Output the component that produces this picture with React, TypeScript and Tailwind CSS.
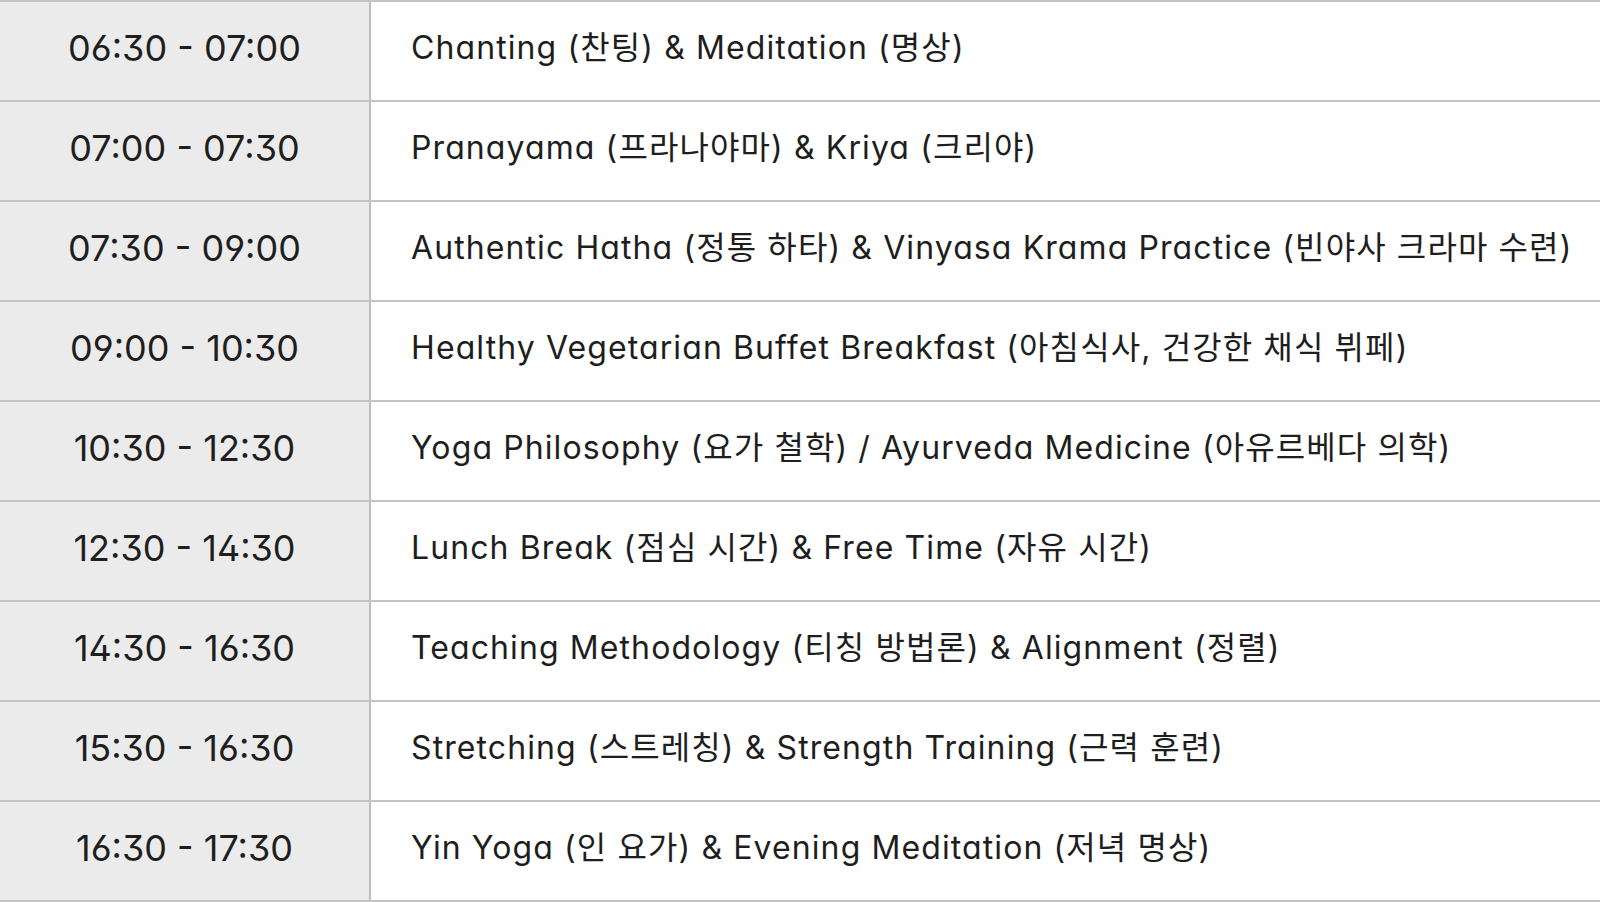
import React from "react";

const rows: [string, string][] = [
  ["06:30 - 07:00", "Chanting (찬팅) & Meditation (명상)"],
  ["07:00 - 07:30", "Pranayama (프라나야마) & Kriya (크리야)"],
  ["07:30 - 09:00", "Authentic Hatha (정통 하타) & Vinyasa Krama Practice (빈야사 크라마 수련)"],
  ["09:00 - 10:30", "Healthy Vegetarian Buffet Breakfast (아침식사, 건강한 채식 뷔페)"],
  ["10:30 - 12:30", "Yoga Philosophy (요가 철학) / Ayurveda Medicine (아유르베다 의학)"],
  ["12:30 - 14:30", "Lunch Break (점심 시간) & Free Time (자유 시간)"],
  ["14:30 - 16:30", "Teaching Methodology (티칭 방법론) & Alignment (정렬)"],
  ["15:30 - 16:30", "Stretching (스트레칭) & Strength Training (근력 훈련)"],
  ["16:30 - 17:30", "Yin Yoga (인 요가) & Evening Meditation (저녁 명상)"],
];

export default function App() {
  return (
    <div
      className="w-[1600px] h-[902px] bg-white overflow-hidden text-[#1e1e1e] [font-feature-settings:'cv11','ss01']"
      style={{ fontFamily: 'Inter, "Noto Sans CJK KR", sans-serif' }}
    >
      <div className="border-t-2 border-[#c4c4c4]">
        {rows.map(([t, d]) => (
          <div key={t} className="flex h-[100px] border-b-2 border-[#c4c4c4]">
            <div className="w-[369px] shrink-0 bg-[#ebebeb] flex items-center justify-center pb-[6px] text-[36px] font-normal">
              {t}
            </div>
            <div className="w-[2px] shrink-0 bg-[#bdbdbd]" />
            <div className="flex-1 flex items-center pl-[40px] pb-[6px] text-[32px] font-normal tracking-[1.1px] whitespace-nowrap">
              {d}
            </div>
          </div>
        ))}
      </div>
    </div>
  );
}
